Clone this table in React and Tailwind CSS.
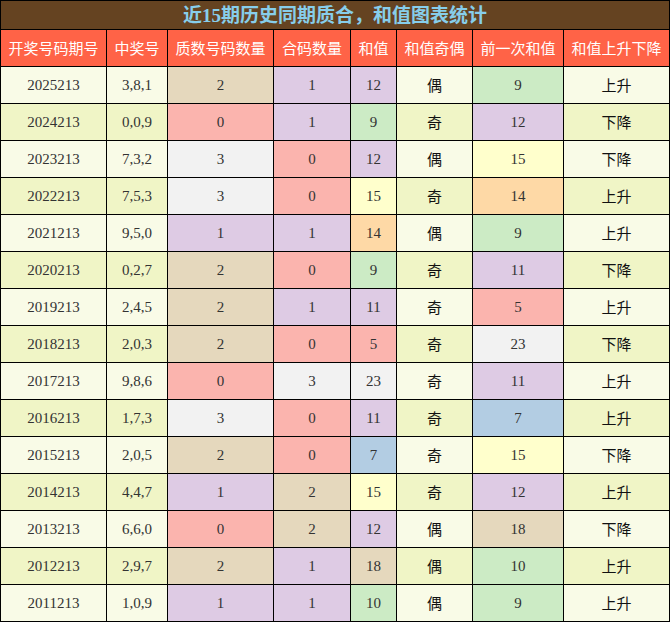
import React from "react";

const PAL = {
  0: "bg-[#fbb4ae]",
  1: "bg-[#decbe4]",
  2: "bg-[#e5d8bd]",
  3: "bg-[#f2f2f2]",
};
const SUM = {
  5: "bg-[#fbb4ae]",
  7: "bg-[#b3cde3]",
  9: "bg-[#ccebc5]",
  10: "bg-[#ccebc5]",
  11: "bg-[#decbe4]",
  12: "bg-[#decbe4]",
  14: "bg-[#fed9a6]",
  15: "bg-[#ffffcc]",
  18: "bg-[#e5d8bd]",
  23: "bg-[#f2f2f2]",
};

const rows = [
  ["2025213", "3,8,1", 2, 1, 12, "偶", 9, "上升"],
  ["2024213", "0,0,9", 0, 1, 9, "奇", 12, "下降"],
  ["2023213", "7,3,2", 3, 0, 12, "偶", 15, "下降"],
  ["2022213", "7,5,3", 3, 0, 15, "奇", 14, "上升"],
  ["2021213", "9,5,0", 1, 1, 14, "偶", 9, "上升"],
  ["2020213", "0,2,7", 2, 0, 9, "奇", 11, "下降"],
  ["2019213", "2,4,5", 2, 1, 11, "奇", 5, "上升"],
  ["2018213", "2,0,3", 2, 0, 5, "奇", 23, "下降"],
  ["2017213", "9,8,6", 0, 3, 23, "奇", 11, "上升"],
  ["2016213", "1,7,3", 3, 0, 11, "奇", 7, "上升"],
  ["2015213", "2,0,5", 2, 0, 7, "奇", 15, "下降"],
  ["2014213", "4,4,7", 1, 2, 15, "奇", 12, "上升"],
  ["2013213", "6,6,0", 0, 2, 12, "偶", 18, "下降"],
  ["2012213", "2,9,7", 2, 1, 18, "偶", 10, "上升"],
  ["2011213", "1,0,9", 1, 1, 10, "偶", 9, "上升"],
];

const headers = ["开奖号码期号", "中奖号", "质数号码数量", "合码数量", "和值", "和值奇偶", "前一次和值", "和值上升下降"];

const num = "h-[36px] flex items-center justify-center text-[15px] text-[#333] font-['Liberation_Serif','Noto_Sans_CJK_SC',serif]";
const zh = "h-[36px] flex items-center justify-center text-[15px] text-[#111] font-['Noto_Sans_CJK_SC',sans-serif]";

export default function App() {
  return (
    <div className="w-[670px] h-[622px] bg-white">
      <div className="grid grid-cols-[105px_60px_105px_76px_45px_75px_90px_105px] gap-px p-px bg-black">
        <div className="col-span-8 h-[28px] bg-[#654321] flex items-center justify-center text-[19px] font-bold text-[#87ceeb] font-['Liberation_Serif','Noto_Sans_CJK_SC',serif] leading-none">
          近15期历史同期质合，和值图表统计
        </div>
        {headers.map((h) => (
          <div key={h} className="h-[36px] bg-[#ff6347] flex items-center justify-center text-[15px] text-white font-['Noto_Sans_CJK_SC',sans-serif]">
            {h}
          </div>
        ))}
        {rows.map((r, i) => {
          const base = i % 2 === 0 ? "bg-[#f9fbe7]" : "bg-[#f0f5c6]";
          return (
            <React.Fragment key={r[0]}>
              <div className={`${num} ${base}`}>{r[0]}</div>
              <div className={`${num} ${base}`}>{r[1]}</div>
              <div className={`${num} ${PAL[r[2]]}`}>{r[2]}</div>
              <div className={`${num} ${PAL[r[3]]}`}>{r[3]}</div>
              <div className={`${num} ${SUM[r[4]]}`}>{r[4]}</div>
              <div className={`${zh} ${base}`}>{r[5]}</div>
              <div className={`${num} ${SUM[r[6]]}`}>{r[6]}</div>
              <div className={`${zh} ${base}`}>{r[7]}</div>
            </React.Fragment>
          );
        })}
      </div>
    </div>
  );
}
